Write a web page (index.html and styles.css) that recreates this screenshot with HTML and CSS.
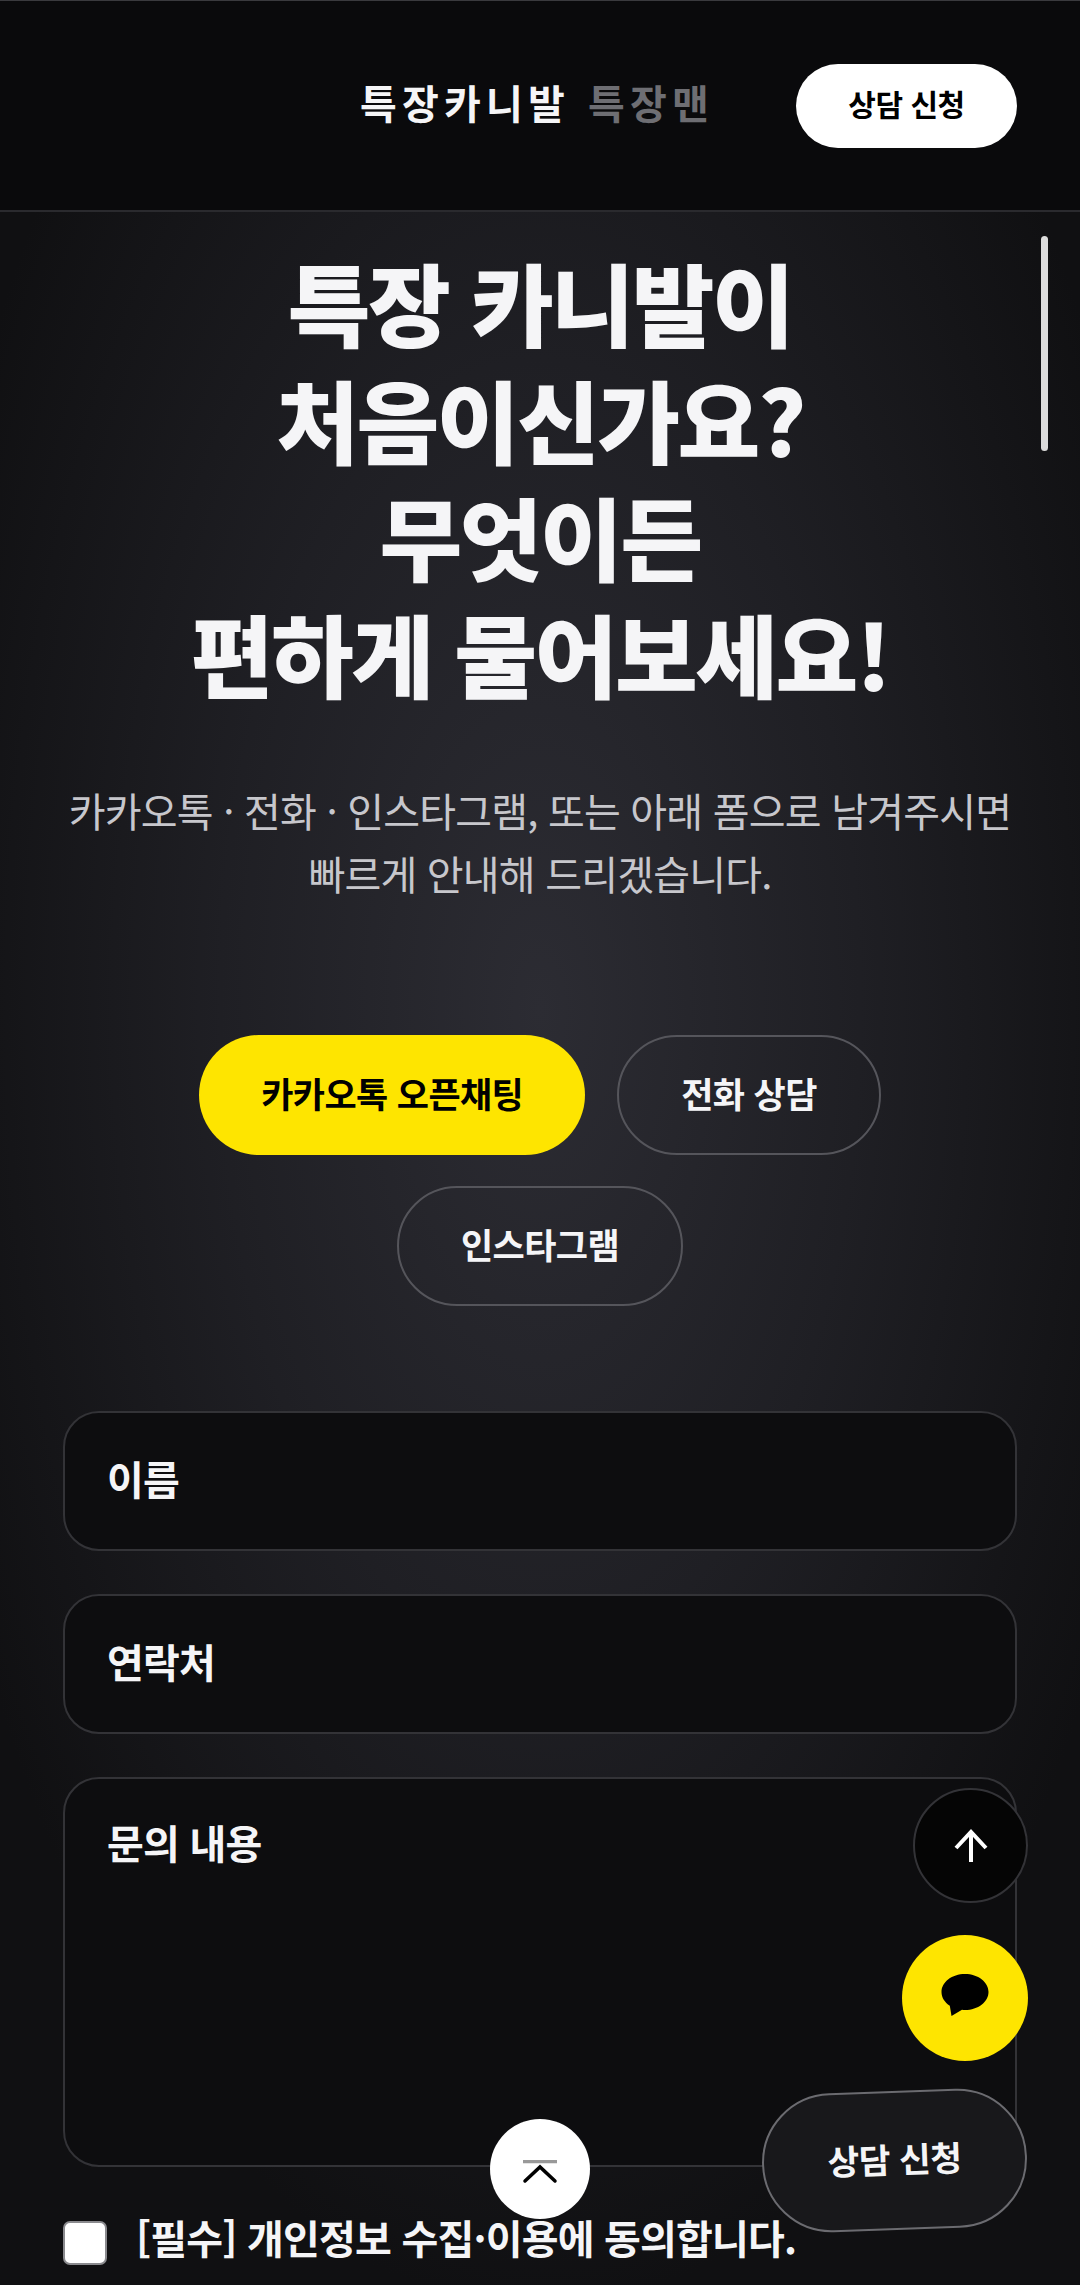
FILE: index.html
```html
<!DOCTYPE html>
<html lang="ko">
<head>
    <meta charset="UTF-8">
    <meta name="viewport" content="width=device-width, initial-scale=1.0">
    <title>특장카니발 상담 신청</title>
    <link rel="stylesheet" href="styles.css">
</head>
<body>
  <header class="site-header">
    <div class="logo">
      <span>특장카니발</span>
      <span class="logo-sub">특장맨</span>
    </div>
    <a class="header-btn" href="#form">상담 신청</a>
  </header>

  <main class="contact">
    <h1>특장 카니발이<br>처음이신가요?<br>무엇이든<br>편하게 물어보세요!</h1>
    <p class="lead">카카오톡 · 전화 · 인스타그램, 또는 아래 폼으로 남겨주시면<br>빠르게 안내해 드리겠습니다.</p>

    <div class="actions">
      <a class="pill pill-kakao" href="#">카카오톡 오픈채팅</a>
      <a class="pill" href="#">전화 상담</a>
      <a class="pill" href="#">인스타그램</a>
    </div>

    <form class="contact-form" id="form">
      <div class="field">이름</div>
      <div class="field">연락처</div>
      <div class="field field-area">문의 내용</div>
      <label class="agree">
        <input type="checkbox">
        <span>[필수] 개인정보 수집·이용에 동의합니다.</span>
      </label>
    </form>
  </main>

  <!-- scrollbar + floating buttons sit over the page -->
  <div class="scroll-thumb"></div>

  <button class="float float-top" type="button" aria-label="위로">
    <svg width="36" height="36" viewBox="0 0 36 36" fill="none" stroke="#fff" stroke-width="4">
      <path d="M18 34V4"/>
      <path d="M3 20 18 4l15 16"/>
    </svg>
  </button>

  <button class="float float-kakao" type="button" aria-label="카카오톡">
    <svg width="48" height="42" viewBox="0 0 48 42">
      <path fill="#000" d="M24 0C11 0 .5 8 .5 18c0 5.500 3.200 10.400 8.300 13.700L10.500 42 21 35.800c1 .1 2 .2 3 .2 13 0 23.500-8 23.500-18S37 0 24 0z"/>
    </svg>
  </button>

  <button class="float float-consult" type="button">상담 신청</button>

  <button class="float float-sheet" type="button" aria-label="맨 위로">
    <svg width="36" height="24" viewBox="0 0 36 24" fill="none" stroke-width="3.500">
      <path d="M1 1.500h34" stroke="#999"/>
      <path d="M3 21 18 7l15 14" stroke="#000" stroke-linecap="round"/>
    </svg>
  </button>
</body>
</html>
```

FILE: styles.css
```css
* {
    box-sizing: border-box;
}

html, body {
    margin: 0;
    height: 2285px;
    overflow: hidden;
}

body {
    position: relative;
    width: 1080px;
    font-family: "Noto Sans CJK KR", "Noto Sans", sans-serif;
    color: #f5f5f7;
    background: radial-gradient(ellipse 640px 1300px at 540px 1010px, #2c2c33 0%, #1f1f24 50%, #101012 100%);
    background-color: #101012;
}

a {
    text-decoration: none;
}

.site-header {
    display: flex;
    align-items: center;
    justify-content: flex-end;
    gap: 82px;
    height: 212px;
    padding-right: 63px;
    background: #0a0a0c;
    border-top: 1px solid #3a3a3e;
    border-bottom: 2px solid #2a2a2e;
}

.logo {
    display: flex;
    gap: 18px;
    margin-bottom: 7px;
    font-size: 40px;
    font-weight: 700;
    letter-spacing: 5.200px;
    line-height: 1;
}

.logo-sub {
    color: #6e6e73;
}

.header-btn {
    display: flex;
    align-items: center;
    justify-content: center;
    width: 221px;
    height: 84px;
    padding-bottom: 5px;
    border-radius: 42px;
    background: #fff;
    color: #000;
    font-size: 30px;
    font-weight: 700;
    letter-spacing: -0.5px;
}

.contact {
    padding: 31px 63px 0;
    text-align: center;
}

h1 {
    margin: 0;
    font-size: 90px;
    font-weight: 800;
    line-height: 117px;
    letter-spacing: -2.500px;
}

.lead {
    margin: 68px -20px 0;
    font-size: 40px;
    line-height: 63px;
    letter-spacing: -0.8px;
    color: #c7c7cc;
}

.actions {
    display: flex;
    flex-wrap: wrap;
    justify-content: center;
    gap: 31px 32px;
    margin-top: 130px;
}

.pill {
    display: flex;
    align-items: center;
    justify-content: center;
    height: 120px;
    padding: 0 62px 6px;
    border: 2px solid #55555b;
    border-radius: 60px;
    color: #f5f5f7;
    font-size: 35px;
    font-weight: 700;
    letter-spacing: -0.6px;
}

.pill-kakao {
    border: none;
    background: #fee500;
    color: #000;
}

.contact-form {
    margin-top: 105px;
    text-align: left;
}

.field {
    display: flex;
    align-items: center;
    height: 140px;
    margin-bottom: 43px;
    padding: 0 42px 6px;
    border: 2px solid #333337;
    border-radius: 36px;
    background: #0d0d0f;
    font-size: 40px;
    font-weight: 700;
    letter-spacing: -0.8px;
}

.field-area {
    align-items: flex-start;
    height: 390px;
    margin-bottom: 0;
    padding-top: 34px;
}

.agree {
    display: flex;
    align-items: flex-start;
    gap: 29px;
    margin-top: 54px;
    font-size: 40px;
    font-weight: 700;
    line-height: 44px;
    letter-spacing: -0.8px;
}

.agree span {
    margin-top: -6px;
    white-space: nowrap;
}

.agree input {
    appearance: none;
    flex: none;
    width: 44px;
    height: 44px;
    margin: 0;
    border: 2px solid #8a8a8e;
    border-radius: 7px;
    background: #fff;
}

.scroll-thumb {
    position: absolute;
    top: 236px;
    left: 1041px;
    width: 7px;
    height: 215px;
    border-radius: 4px;
    background: #dcdcdc;
}

.float {
    position: absolute;
    display: flex;
    align-items: center;
    justify-content: center;
    padding: 0;
    border: none;
    border-radius: 50%;
    font-family: inherit;
}

.float-top {
    top: 1788px;
    left: 913px;
    width: 115px;
    height: 115px;
    border: 2px solid #333337;
    background: #050505;
}

.float-kakao {
    top: 1935px;
    left: 902px;
    width: 126px;
    height: 126px;
    background: #fee500;
}

.float-kakao svg {
    margin-bottom: 6px;
}

.float-consult {
    top: 2091px;
    left: 762px;
    width: 265px;
    height: 139px;
    padding-bottom: 6px;
    border: 2px solid #6b6b70;
    border-radius: 70px;
    background: #18181b;
    color: #f5f5f7;
    font-size: 34.500px;
    font-weight: 700;
    letter-spacing: -0.5px;
    transform: rotate(-2deg);
}

.float-sheet {
    top: 2119px;
    left: 490px;
    width: 100px;
    height: 100px;
    background: #fff;
}

.float-sheet svg {
    margin-top: 6px;
}
```
